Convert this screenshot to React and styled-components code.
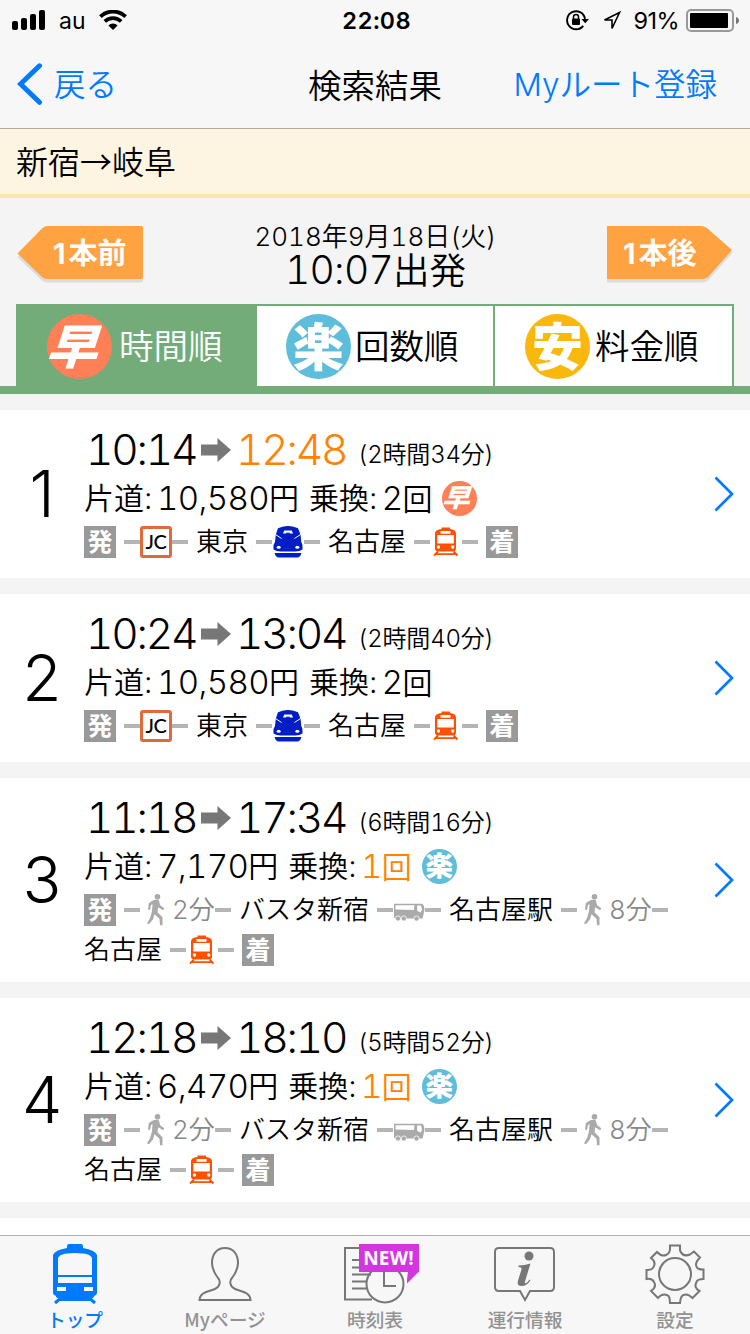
import styled, { createGlobalStyle, css } from "styled-components";

const colors = {
  blue: "#007aff",
  orange: "#ff8200",
  button: "#ffa342",
  green: "#74ac79",
  line: "#b5b5b5",
  gray: "#999",
  background: "#f4f4f4",
};

const GlobalStyle = createGlobalStyle`
  * {
    box-sizing: border-box;
    margin: 0;
    padding: 0;
  }

  body {
    width: 750px;
    height: 1334px;
    overflow: hidden;
    background: ${colors.background};
    color: #000;
    font-family: "Inter", "Noto Sans CJK JP", sans-serif;
    font-weight: 350;
  }

  button {
    border: 0;
    background: none;
    font: inherit;
    color: inherit;
  }

  svg {
    display: block;
    flex: none;
  }
`;

const Screen = styled.div`
  width: 750px;
  height: 1334px;
  display: flex;
  flex-direction: column;
  overflow: hidden;
`;

/* status bar */
const StatusBar = styled.div`
  height: 40px;
  flex: none;
  display: grid;
  grid-template-columns: 1fr auto 1fr;
  align-items: center;
  padding: 0 11px 0 12px;
  background: #f7f7f7;
  font-size: 24px;
  font-weight: 400;
`;

const StatusGroup = styled.div`
  display: flex;
  align-items: center;
  justify-content: ${({ $end }) => ($end ? "flex-end" : "flex-start")};
`;

const Carrier = styled.span`
  margin: 0 13px 0 14px;
  padding-top: 2px;
  font-size: 23px;
`;

const Clock = styled.time`
  padding-left: 2px;
  font-size: 23.5px;
  font-weight: 600;
  letter-spacing: 0.4px;
  font-variant-numeric: tabular-nums;
`;

const Percent = styled.span`
  margin: 0 7px 0 12px;
  font-size: 23.5px;
  letter-spacing: -0.6px;
`;

/* navigation */
const NavBar = styled.header`
  height: 89px;
  flex: none;
  display: grid;
  grid-template-columns: 1fr auto 1fr;
  align-items: center;
  padding: 0 17px;
  background: #f7f7f7;
  border-bottom: 1px solid #b3ab9a;
`;

const NavButton = styled.button`
  display: flex;
  align-items: center;
  gap: 11px;
  justify-self: ${({ $end }) => ($end ? "end" : "start")};
  margin-right: ${({ $end }) => ($end ? 16 : 0)}px;
  color: ${colors.blue};
  font-size: 31.5px;
  line-height: 86px;

  span {
    padding-top: 2px;
  }
`;

const NavTitle = styled.h1`
  padding-top: 3px;
  font-size: 33.5px;
  font-weight: 350;
  line-height: 84px;
`;

const RouteTitle = styled.h2`
  height: 69px;
  flex: none;
  padding-left: 16px;
  background: #fdf5e2;
  border-bottom: 4px solid #f9e6b1;
  font-family: "Noto Sans CJK JP", sans-serif;
  font-size: 32px;
  font-weight: 350;
  line-height: 63px;
`;

/* departure */
const Departure = styled.div`
  height: 106px;
  flex: none;
  display: grid;
  grid-template-columns: 127px 1fr 127px;
  align-items: start;
  padding: 27px 17px 0 16px;
`;

const StepButton = styled.button`
  position: relative;
  width: 127px;
  height: 56px;
  padding-left: ${({ $next }) => ($next ? "17px" : "37px")};
  color: #fff;
  font-size: 29px;
  font-weight: 700;
  line-height: 53px;
  text-align: left;
  white-space: nowrap;

  svg {
    position: absolute;
    inset: 0;
    z-index: -1;
  }
`;

const StepNumber = styled.span`
  letter-spacing: 3px;
`;

const DepartureTime = styled.div`
  text-align: center;
  white-space: nowrap;
`;

const DepartureDate = styled.p`
  padding-left: 2px;
  font-size: 26px;
  font-variant-numeric: tabular-nums;
  line-height: 24px;
`;

const DepartureHour = styled.p`
  padding-left: 2px;
  font-size: 36.5px;
  line-height: 41px;
`;

const Num = styled.span`
  font-size: ${({ $scale }) => $scale || 1.05}em;
  letter-spacing: ${({ $spacing }) => $spacing || 0}px;
  font-variant-numeric: tabular-nums;
`;

/* sort tabs */
const Tabs = styled.nav`
  height: 90px;
  flex: none;
  display: flex;
  padding: 0 16px;
  border-bottom: 8px solid ${colors.green};
  margin-bottom: 16px;
`;

const Tab = styled.button`
  width: ${({ $active }) => ($active ? 241 : 238)}px;
  display: flex;
  align-items: center;
  padding-left: ${({ $active }) => ($active ? 31 : 29)}px;
  gap: ${({ $gap }) => $gap}px;
  border-top: 2px solid ${colors.green};
  border-right: 2px solid ${colors.green};
  background: ${({ $active }) => ($active ? colors.green : "#fff")};
  color: ${({ $active }) => ($active ? "#fff" : "#000")};
  font-size: 34.5px;
  line-height: 80px;
  white-space: nowrap;

  &:last-child {
    width: 239px;
    padding-left: 30px;
  }
`;

const TabLabel = styled.span`
  padding-top: 2px;
  line-height: 78px;
`;

const badgeColors = { 早: "#ff7f57", 楽: "#5fbddc", 安: "#fab70c" };

const Badge = styled.span`
  width: ${({ $size }) => $size}px;
  height: ${({ $size }) => $size}px;
  flex: none;
  display: flex;
  align-items: center;
  justify-content: center;
  border-radius: 50%;
  background: ${({ $kind }) => badgeColors[$kind]};
  color: #fff;
  font-family: "Noto Sans CJK JP", sans-serif;
  font-size: ${({ $size }) => $size * 0.79}px;
  font-weight: 900;
  line-height: 1;

  span {
    display: block;
    margin-top: -0.08em;
    ${({ $kind }) =>
      $kind === "早" &&
      css`
        margin-left: -0.08em;
        transform: skewX(-18deg) scaleY(0.92);
      `}
  }
`;

/* result cards */
const Card = styled.article`
  min-height: 168px;
  flex: none;
  display: grid;
  grid-template-columns: 84px 1fr 36px;
  align-items: center;
  padding: 16px 0 12px;
  margin-bottom: 16px;
  background: #fff;

  > svg {
    margin-top: -4px;
  }
`;

const Rank = styled.div`
  margin-top: -5px;
  font-size: 64px;
  line-height: 1;
  text-align: center;
`;

const Detail = styled.div`
  align-self: start;
`;

const TimeLine = styled.div`
  height: 48px;
  display: flex;
  align-items: center;
  padding-left: 2px;
  font-size: 42.5px;
  letter-spacing: -2.2px;
  font-variant-numeric: tabular-nums;
  line-height: 48px;

  svg {
    margin: 0 5px;
  }
`;

const Clocking = styled.time`
  width: 110px;
  color: ${({ $best }) => ($best ? colors.orange : "#000")};
`;

const Duration = styled.span`
  margin-left: 12px;
  padding-top: 9px;
  font-size: 24px;
  letter-spacing: -0.2px;
  line-height: 39px;
`;

const FareLine = styled.div`
  height: 48px;
  display: flex;
  align-items: center;
  font-size: 30px;
  line-height: 48px;
  white-space: pre;
  word-spacing: -4px;
`;

const Changes = styled.span`
  margin-right: 10px;
  color: ${({ $best }) => ($best ? colors.orange : "#000")};
`;

const ChangesLabel = styled.span`
  margin-left: 10px;
`;

const RouteLine = styled.div`
  height: 40px;
  display: flex;
  align-items: center;
  font-size: 26px;
  line-height: 40px;
  white-space: nowrap;
`;

const Station = styled.span`
  margin: 0 8px;

  &:first-child {
    margin-left: 0;
  }
`;

const Endpoint = styled.span`
  width: 32px;
  height: 32px;
  margin-left: ${({ $goal }) => ($goal ? 8 : 0)}px;
  margin-right: 8px;
  background: ${colors.gray};
  color: #fff;
  font-size: 25px;
  font-weight: 700;
  line-height: 32px;
  text-align: center;
`;

const Dash = styled.span`
  width: 16px;
  height: 4px;
  background: ${colors.line};
`;

const Walk = styled.span`
  width: 75px;
  display: flex;
  align-items: center;
  color: #888;
  font-size: 26px;
`;

const LineBadge = styled.span`
  width: 32px;
  height: 32px;
  border: 3px solid #e06a3b;
  border-radius: 3px;
  background: #fff;
  font-family: "Lato", sans-serif;
  font-size: 20px;
  font-weight: 500;
  line-height: 25px;
  text-align: center;
  letter-spacing: -0.5px;
`;

/* bottom tab bar */
const TabBar = styled.nav`
  height: 99px;
  flex: none;
  display: grid;
  grid-template-columns: repeat(5, 1fr);
  margin-top: auto;
  background: #f7f7f7;
  border-top: 1px solid #b2b2b2;
`;

const TabItem = styled.button`
  display: flex;
  flex-direction: column;
  align-items: center;
  padding-top: 5px;
  color: ${({ $active }) => ($active ? colors.blue : "#929292")};
  font-family: "Noto Sans CJK JP", sans-serif;
  font-size: 18.7px;
  font-weight: 500;
  line-height: 28px;
`;

const IconHolder = styled.span`
  position: relative;
  height: 64px;
`;

const NewBadge = styled.span`
  position: absolute;
  top: 3px;
  left: 21px;
  width: 60px;
  height: 28px;
  background: #d336df;
  color: #fff;
  font-family: "Open Sans", sans-serif;
  font-size: 19px;
  font-weight: 700;
  line-height: 28px;
  text-align: center;
  letter-spacing: 0.2px;

  &::after {
    content: "";
    position: absolute;
    top: 28px;
    right: 0;
    width: 12px;
    height: 12px;
    background: inherit;
    clip-path: polygon(12% 0, 100% 0, 0 100%);
  }
`;

const LastCard = styled.div`
  flex: 1;
  background: #fff;
`;

const StatusIcons = styled.span`
  display: flex;
  align-items: center;
  gap: 13px;
`;

const SignalIcon = () => (
  <svg width="33" height="20" viewBox="0 0 33 20">
    <rect x="0" y="11" width="6" height="9" rx="2" />
    <rect x="9" y="8" width="6" height="12" rx="2" />
    <rect x="18" y="4" width="6" height="16" rx="2" />
    <rect x="27" y="0" width="6" height="20" rx="2" />
  </svg>
);

const WifiIcon = () => (
  <svg width="28" height="20" viewBox="0 0 28 20" fill="none" stroke="#000">
    <path d="M1.4 6.7a18 18 0 0 1 25.2 0" strokeWidth="3.8" />
    <path d="M5.8 11.4a11.8 11.8 0 0 1 16.4 0" strokeWidth="3.6" />
    <path d="M9.4 15.4a6.7 6.7 0 0 1 9.2 0L14 20z" fill="#000" stroke="none" />
  </svg>
);

const LockIcon = () => (
  <svg width="23" height="22" viewBox="0 0 23 22" fill="none" stroke="#000">
    <path d="M17.2 16.8A9 9 0 1 1 19 10" strokeWidth="1.9" />
    <path d="M15.5 10h7.5l-3.8 4.2z" fill="#000" stroke="none" />
    <rect x="6" y="9.5" width="8" height="6.5" rx="1" fill="#000" stroke="none" />
    <path d="M7.5 10V8a2.5 2.5 0 0 1 5 0v2" strokeWidth="1.5" />
  </svg>
);

const LocationIcon = () => (
  <svg width="20" height="20" viewBox="0 0 20 20" fill="none" stroke="#000">
    <path d="M17.5 2.5 2.5 10h7.500v8.500z" strokeWidth="1.6" />
  </svg>
);

const BatteryIcon = () => (
  <svg width="53" height="23" viewBox="0 0 53 23">
    <rect
      x="1"
      y="1"
      width="46"
      height="21"
      rx="4"
      fill="none"
      stroke="#999"
      strokeWidth="2"
    />
    <rect x="4" y="4" width="38" height="15" rx="1" />
    <path d="M50 8q3 1 3 3.5T50 15z" fill="#777" />
  </svg>
);

const BackIcon = () => (
  <svg width="26" height="42" viewBox="0 0 26 42" fill="none">
    <path
      d="M22.5 2.8 3.5 21l19 18.3"
      stroke={colors.blue}
      strokeWidth="5"
      strokeLinecap="round"
    />
  </svg>
);

const PREV_SHAPE = "M1.500 28.500 26 3.500Q28.500 1 31 1h94q2 0 2 2v49q0 2-2 2H31q-3 0-5-2z";
const NEXT_SHAPE = "M1 1h94q4 0 6.500 2.500L126 25l-24 27q-2 2-6 2H1z";

const StepShape = ({ d }) => (
  <svg width="127" height="58" viewBox="0 0 127 58">
    <path d={d} fill="#dcdcdc" transform="translate(0 3.500)" />
    <path d={d} fill={colors.button} />
  </svg>
);

const ArrowIcon = () => (
  <svg width="30" height="24" viewBox="0 0 30 24" fill="#777">
    <path d="M0 6.5h16.5V0L30 12 16.5 24v-6.5H0z" />
  </svg>
);

const ChevronIcon = () => (
  <svg width="20" height="36" viewBox="0 0 20 36" fill="none">
    <path d="M1.5 1.5 18 18 1.5 34.5" stroke={colors.blue} strokeWidth="2.7" />
  </svg>
);

const ShinkansenIcon = () => (
  <svg width="32" height="32" viewBox="0 0 32 32" fill="#001ec4">
    <path d="M10.500 .800q5.500-1.500 11 0l4.500 1.500 2.500 6.200.800 7.500 1.200 3v4.500q-3 2-7 2h-15q-4 0-7-2V19l1.500-3 .800-7.500L6 2.300z" />
    <path d="M2.500 27h27q-.500 3.200-3.500 4.500H6q-3-1.300-3.500-4.500z" />
    <path d="M3 8.200 9.500 12.500M29 8.200l-6.500 4.300" stroke="#fff" strokeWidth="1" />
    <path d="M12.200 4.500h7.600l1.200 3h-3l-.700-.800h-2.600l-.700.800h-3z" fill="#fff" />
    <ellipse cx="6.700" cy="21.200" rx="2" ry="1.500" fill="#fff" />
    <ellipse cx="25.300" cy="21.200" rx="2" ry="1.500" fill="#fff" />
  </svg>
);

const LocalTrainIcon = () => (
  <svg width="32" height="32" viewBox="0 0 32 32">
    <path
      fillRule="evenodd"
      fill="#ff5000"
      d="M11.500 1.500h8.500v1.500q5.500.500 6 4v15.500q0 3-3 3H8q-3 0-3-3V7q.500-3.500 6.500-4zM7.300 9v8.500h16.500V9zM10.500 5v2.800h10V5z"
    />
    <circle cx="8.500" cy="21" r="1.700" fill="#fff" />
    <circle cx="22.700" cy="21" r="1.700" fill="#fff" />
    <path
      d="m8 25.500-4 4M23.500 25.500l4 4M6 28.200h20"
      stroke="#ff5000"
      strokeWidth="1.800"
    />
  </svg>
);

const WalkIcon = () => (
  <svg width="32" height="32" viewBox="0 0 32 32" fill="#aaa">
    <circle cx="17.500" cy="2.800" r="2.800" />
    <path d="M11.500 7.200q4-2 7.200-1l1.500 5 4 3-1 2-5-3-.700 5 5 5v8h-2.500l-.500-6.500-5-4.500-1.500 5-4 5-2-1 3-5 2-7 .500-7-1.500.700-1 5-2-.500.800-6.200z" />
  </svg>
);

const BusIcon = () => (
  <svg width="32" height="32" viewBox="0 0 32 32">
    <path
      fillRule="evenodd"
      fill="#aaa"
      d="M1 9.800h28.500q2 2 2 5.500L29.700 24.500H2L1 23.500zM2.500 11.300v4.200l18.500.500.500-4.700zM24 11.500l.200 5.500 3.800 1.500 1-3.500-1-3.500z"
    />
    <g fill="#aaa" stroke="#fff" strokeWidth="0.8">
      <circle cx="5" cy="24.500" r="2.600" />
      <circle cx="10.800" cy="24.500" r="2.600" />
      <circle cx="23.500" cy="24.500" r="2.600" />
    </g>
  </svg>
);

const TrainTabIcon = () => (
  <svg width="60" height="64" viewBox="0 0 60 64">
    <path
      fillRule="evenodd"
      fill={colors.blue}
      d="M24 3h12q2 0 2 2v2q12 2 14 7v38q0 2-3 3v1q-2 2-6 2H17q-4 0-6-2v-1q-3-1-3-3V14q2-5 14-7V5q0-2 2-2zM13 18v16h34V18q0-6-17-6t-17 6zM13 36v6h34v-6zM12 46v4h9v-4zM39 46v4h9v-4z"
    />
    <path
      d="m17 56-7 6M43 56l7 6M14 58.500h32"
      stroke={colors.blue}
      strokeWidth="3"
    />
  </svg>
);

const PersonIcon = () => (
  <svg width="60" height="64" viewBox="0 0 60 64" fill="none">
    <path
      d="M30 7c-8 0-13 6-13 15 0 7 3 11 6 15 3 3 2 9-3 11-7 3-15 3-15.500 11h51C55 51 47 51 40 48c-5-2-6-8-3-11 3-4 6-8 6-15 0-9-5-15-13-15z"
      stroke="#777"
      strokeWidth="2"
    />
  </svg>
);

const TimetableIcon = () => (
  <svg width="75" height="64" viewBox="0 0 75 64" fill="none" stroke="#777" strokeWidth="2">
    <path d="M34 58.500H7V7h38M14 19h16M14 26.500h16M14 33.500h19M14 40.500h15M14 47.500h14" />
    <circle cx="47" cy="43" r="18.500" />
    <path d="M46 31v14h12" />
  </svg>
);

const InfoIcon = () => (
  <svg width="62" height="64" viewBox="0 0 62 64">
    <path
      d="M5 7h51q4 0 4 4v35q0 4-4 4H36l-5 9-5-9H5q-4 0-4-4V11q0-4 4-4z"
      fill="none"
      stroke="#777"
      strokeWidth="2"
    />
    <circle cx="35" cy="15" r="4.500" fill="#777" />
    <path
      d="M24.500 24.500q6 0 12-2l-5.500 18q-.500 2.500 1.200 1.500 1.800-1 3.300-3.500l1 .700Q33 45 27.500 45q-5 0-3.500-5.500l3.500-11q.500-2.500-3-2.500z"
      fill="#777"
    />
  </svg>
);

const GearIcon = () => (
  <svg width="62" height="64" viewBox="-31 -33 62 64" fill="none" stroke="#777" strokeWidth="2">
    <circle r="16" />
    <path d="M-5-28.500H5v5q3 7 10 4l4-3 6 6q-6 6-3 10 1 2 6.500 2V5q-6 0-7 3-3 6 3 9l-7 7q-5-5-9-3-3 1-3.500 8H-5q0-7-3-8-5-2-9 3l-7-7q6-4 3-9-2-4-7.500-3v-9q6 0 7-3 3-5-2.500-9l6-6q5 5 9 3 4-2 4-6z" />
  </svg>
);

const TAB_ITEMS = [
  { label: "トップ", icon: <TrainTabIcon />, active: true },
  { label: "Myページ", icon: <PersonIcon /> },
  { label: "時刻表", icon: <TimetableIcon />, isNew: true },
  { label: "運行情報", icon: <InfoIcon /> },
  { label: "設定", icon: <GearIcon /> },
];

const railRoute = [
  [
    { type: "end", text: "発" },
    { type: "jc" },
    { type: "station", text: "東京" },
    { type: "shinkansen" },
    { type: "station", text: "名古屋" },
    { type: "train" },
    { type: "goal", text: "着" },
  ],
];

const busRoute = [
  [
    { type: "end", text: "発" },
    { type: "walk", minutes: 2 },
    { type: "station", text: "バスタ新宿" },
    { type: "bus" },
    { type: "station", text: "名古屋駅" },
    { type: "walk", minutes: 8 },
  ],
  [
    { type: "station", text: "名古屋" },
    { type: "train" },
    { type: "goal", text: "着" },
  ],
];

const RESULTS = [
  { from: "10:14", to: "12:48", hours: 2, minutes: 34, fare: "10,580", changes: 2, badge: "早", fastest: true, route: railRoute },
  { from: "10:24", to: "13:04", hours: 2, minutes: 40, fare: "10,580", changes: 2, route: railRoute },
  { from: "11:18", to: "17:34", hours: 6, minutes: 16, fare: "7,170", changes: 1, badge: "楽", route: busRoute },
  { from: "12:18", to: "18:10", hours: 5, minutes: 52, fare: "6,470", changes: 1, badge: "楽", route: busRoute },
];

const vehicles = {
  jc: <LineBadge>JC</LineBadge>,
  shinkansen: <ShinkansenIcon />,
  train: <LocalTrainIcon />,
  bus: <BusIcon />,
};

const KindBadge = ({ kind, size }) => (
  <Badge $kind={kind} $size={size}>
    <span>{kind}</span>
  </Badge>
);

const RoutePart = ({ part }) => {
  if (part.type === "station") return <Station>{part.text}</Station>;
  if (part.type === "end") return <Endpoint>{part.text}</Endpoint>;
  if (part.type === "goal") return <Endpoint $goal>{part.text}</Endpoint>;

  return (
    <>
      <Dash />
      {part.type === "walk" ? (
        <Walk>
          <WalkIcon />
          <Num $scale={1}>{part.minutes}</Num>分
        </Walk>
      ) : (
        vehicles[part.type]
      )}
      <Dash />
    </>
  );
};

const ResultCard = ({ rank, result }) => (
  <Card>
    <Rank>{rank}</Rank>

    <Detail>
      <TimeLine>
        <Clocking>{result.from}</Clocking>
        <ArrowIcon />
        <Clocking $best={result.fastest}>{result.to}</Clocking>
        <Duration>
          ({result.hours}時間{result.minutes}分)
        </Duration>
      </TimeLine>

      <FareLine>
        片道:{" "}
        <Num $scale={1.1} $spacing={-0.6}>
          {result.fare}
        </Num>
        円
        <ChangesLabel>乗換: </ChangesLabel>
        <Changes $best={result.changes === 1}>
          <Num $scale={1.1} $spacing={-0.7}>
            {result.changes}
          </Num>
          回
        </Changes>
        {result.badge && <KindBadge kind={result.badge} size={35} />}
      </FareLine>

      {result.route.map((line, i) => (
        <RouteLine key={i}>
          {line.map((part, j) => (
            <RoutePart key={j} part={part} />
          ))}
        </RouteLine>
      ))}
    </Detail>

    <ChevronIcon />
  </Card>
);

const App = () => {
  return (
    <>
      <GlobalStyle />
      <Screen>
        <StatusBar>
          <StatusGroup>
            <SignalIcon />
            <Carrier>au</Carrier>
            <WifiIcon />
          </StatusGroup>
          <Clock>22:08</Clock>
          <StatusGroup $end>
            <StatusIcons>
              <LockIcon />
              <LocationIcon />
            </StatusIcons>
            <Percent>91%</Percent>
            <BatteryIcon />
          </StatusGroup>
        </StatusBar>

        <NavBar>
          <NavButton>
            <BackIcon />
            <span>戻る</span>
          </NavButton>
          <NavTitle>検索結果</NavTitle>
          <NavButton $end>
            <span>Myルート登録</span>
          </NavButton>
        </NavBar>

        <RouteTitle>新宿→岐阜</RouteTitle>

        <Departure>
          <StepButton>
            <StepShape d={PREV_SHAPE} />
            <StepNumber>1</StepNumber>本前
          </StepButton>
          <DepartureTime>
            <DepartureDate>2018年9月18日(火)</DepartureDate>
            <DepartureHour>
              <Num $scale={1.07} $spacing={-0.7}>
                10:07
              </Num>
              出発
            </DepartureHour>
          </DepartureTime>
          <StepButton $next>
            <StepShape d={NEXT_SHAPE} />
            <StepNumber>1</StepNumber>本後
          </StepButton>
        </Departure>

        <Tabs>
          <Tab $active $gap={7}>
            <KindBadge kind="早" size={65} />
            <TabLabel>時間順</TabLabel>
          </Tab>
          <Tab $gap={4}>
            <KindBadge kind="楽" size={65} />
            <TabLabel>回数順</TabLabel>
          </Tab>
          <Tab $gap={5}>
            <KindBadge kind="安" size={65} />
            <TabLabel>料金順</TabLabel>
          </Tab>
        </Tabs>

        {RESULTS.map((result, i) => (
          <ResultCard key={i} rank={i + 1} result={result} />
        ))}
        <LastCard />

        <TabBar>
          {TAB_ITEMS.map(({ label, icon, active, isNew }) => (
            <TabItem key={label} $active={active}>
              <IconHolder>
                {icon}
                {isNew && <NewBadge>NEW!</NewBadge>}
              </IconHolder>
              {label}
            </TabItem>
          ))}
        </TabBar>
      </Screen>
    </>
  );
};

export default App;
